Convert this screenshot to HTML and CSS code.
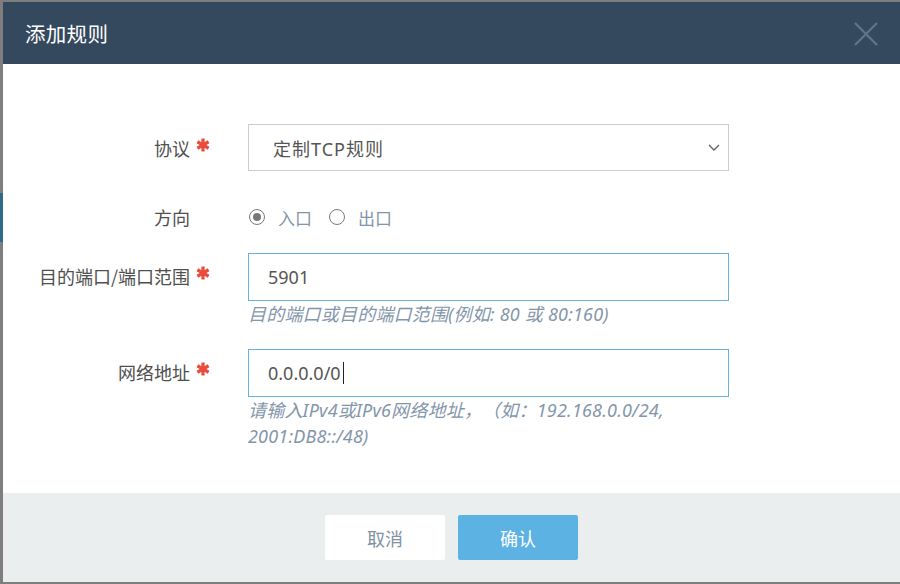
FILE: index.html
```html
<!DOCTYPE html>
<html lang="zh-CN">
<head>
<meta charset="utf-8">
<title>添加规则</title>
<link rel="stylesheet" href="styles.css">
</head>
<body>
<div class="page">
  <div class="dialog">
    <div class="dialog-header">
      <h1 class="dialog-title">添加规则</h1>
      <button class="close-btn" aria-label="关闭">
        <svg width="24" height="24" viewBox="0 0 24 24"><path d="M1 1 L23 23 M23 1 L1 23" stroke="#617386" stroke-width="2.4" fill="none"/></svg>
      </button>
    </div>
    <div class="dialog-body">
      <div class="form-row">
        <div class="label label-tall-select">协议<span class="star"><svg width="14" height="14" viewBox="0 0 14 14"><g stroke="#e74c3c" stroke-width="3.2"><path d="M7 0.5 V13.5"/><path d="M1.4 3.75 L12.6 10.25"/><path d="M1.4 10.25 L12.6 3.75"/></g></svg></span></div>
        <div class="field">
          <div class="select">
            <span class="select-text">定制TCP规则</span>
            <svg class="chevron" width="12" height="8" viewBox="0 0 12 8"><path d="M1 1 L6 6 L11 1" stroke="#666" stroke-width="1.4" fill="none"/></svg>
          </div>
        </div>
      </div>
      <div class="form-row row-radio">
        <div class="label label-radio">方向<span class="star"></span></div>
        <div class="field radios">
          <span class="radio checked"></span><span class="radio-label first">入口</span>
          <span class="radio"></span><span class="radio-label">出口</span>
        </div>
      </div>
      <div class="form-row row-port">
        <div class="label label-input">目的端口/端口范围<span class="star"><svg width="14" height="14" viewBox="0 0 14 14"><g stroke="#e74c3c" stroke-width="3.2"><path d="M7 0.5 V13.5"/><path d="M1.4 3.75 L12.6 10.25"/><path d="M1.4 10.25 L12.6 3.75"/></g></svg></span></div>
        <div class="field">
          <div class="input">5901</div>
          <div class="help">目的端口或目的端口范围(例如: 80 或 80:160)</div>
        </div>
      </div>
      <div class="form-row row-addr">
        <div class="label label-input">网络地址<span class="star"><svg width="14" height="14" viewBox="0 0 14 14"><g stroke="#e74c3c" stroke-width="3.2"><path d="M7 0.5 V13.5"/><path d="M1.4 3.75 L12.6 10.25"/><path d="M1.4 10.25 L12.6 3.75"/></g></svg></span></div>
        <div class="field">
          <div class="input">0.0.0.0/0<span class="caret"></span></div>
          <div class="help help-wrap">请输入IPv4或IPv6网络地址，（如：192.168.0.0/24, 2001:DB8::/48)</div>
        </div>
      </div>
    </div>
    <div class="dialog-footer">
      <button class="btn btn-cancel">取消</button>
      <button class="btn btn-ok">确认</button>
    </div>
  </div>
</div>
</body>
</html>
```
FILE: styles.css
```css
* { box-sizing: border-box; }
html, body { margin: 0; padding: 0; }
body {
  width: 900px;
  height: 584px;
  overflow: hidden;
  background: linear-gradient(to bottom, #7e7e7e 0, #7e7e7e 193px, #2f6a8c 193px, #2f6a8c 242px, #7e7e7e 242px);
  font-family: "Noto Sans", "Noto Sans CJK SC", sans-serif;
  text-spacing-trim: space-all;
}
.page {
  padding: 2px 0 2px 3px;
  height: 584px;
}
.dialog {
  width: 897px;
  height: 580px;
  background: #fff;
  display: flex;
  flex-direction: column;
}
.dialog-header {
  height: 62px;
  background: #34495e;
  display: flex;
  align-items: center;
  justify-content: space-between;
  padding: 0 22px 0 22px;
}
.dialog-title {
  margin: 0;
  font-family: "Noto Sans CJK SC", sans-serif;
  font-size: 20.5px;
  font-weight: 400;
  color: #fff;
  letter-spacing: 0.3px;
}
.close-btn {
  border: 0;
  background: none;
  padding: 0;
  width: 24px;
  height: 24px;
  display: block;
  margin-top: 2px;
}
.close-btn svg { display: block; }
.dialog-body {
  flex: 1;
  padding-top: 60px;
}
.form-row {
  display: grid;
  grid-template-columns: 207px 481px;
  column-gap: 38px;
  align-items: start;
}
.row-radio { margin-top: 31px; }
.row-port { margin-top: 21px; }
.row-addr { margin-top: 22px; }
.label {
  display: flex;
  justify-content: flex-end;
  align-items: center;
  font-family: "Noto Sans CJK SC", sans-serif;
  font-size: 18px;
  color: #4f4f4f;
  white-space: nowrap;
}
.label-tall-select { height: 47px; }
.label-radio { height: 30px; }
.label-input { height: 46px; }
.star {
  display: inline-flex;
  width: 20px;
  justify-content: flex-end;
  align-items: center;
  margin-top: -6px;
}
.star svg { display: block; }
.select {
  height: 47px;
  border: 1px solid #cccccc;
  display: flex;
  align-items: center;
  justify-content: space-between;
  padding: 0 8px 0 24px;
}
.select-text {
  font-size: 18px;
  color: #555;
  letter-spacing: 1px;
}
.chevron { display: block; margin-top: 1px; }
.radios {
  display: flex;
  align-items: center;
  height: 30px;
}
.radio {
  width: 16px;
  height: 16px;
  border: 1.5px solid #7a7a7a;
  border-radius: 50%;
  display: inline-flex;
  align-items: center;
  justify-content: center;
  margin-left: 1px;
}
.radio.checked::after {
  content: "";
  width: 8px;
  height: 8px;
  border-radius: 50%;
  background: #777;
}
.radio-label {
  font-family: "Noto Sans CJK SC", sans-serif;
  font-size: 17px;
  color: #8395a8;
  margin-left: 13px;
}
.radio-label.first { margin-right: 16px; }
.input {
  height: 48px;
  border: 1px solid #6aafe2;
  display: flex;
  align-items: center;
  padding-left: 19px;
  font-size: 18px;
  color: #555;
}
.caret {
  display: inline-block;
  width: 1.5px;
  height: 22px;
  background: #222;
  margin-left: 2px;
}
.help {
  font-style: italic;
  font-size: 18px;
  line-height: 26px;
  color: #8496aa;
  letter-spacing: 0.2px;
}
.help-wrap { width: 470px; }
.dialog-footer {
  height: 89px;
  background: #eaeeef;
  display: flex;
  justify-content: center;
  align-items: flex-start;
  padding-top: 22px;
  gap: 13px;
}
.btn {
  width: 120px;
  height: 45px;
  border: 0;
  border-radius: 2px;
  font-family: "Noto Sans CJK SC", sans-serif;
  font-size: 18px;
}
.btn-cancel { background: #fff; color: #8192a4; }
.btn-ok { background: #5db2e4; color: #fff; }
```
